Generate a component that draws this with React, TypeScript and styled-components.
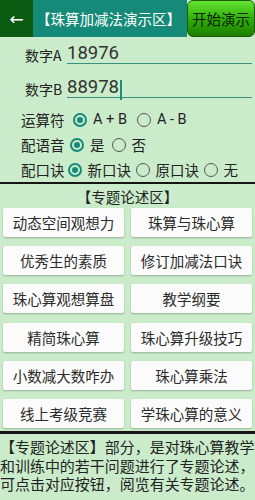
import React from 'react';
import styled, { createGlobalStyle } from 'styled-components';

const Global = createGlobalStyle`
  html, body { margin: 0; padding: 0; background: #cbeccb; }
  body {
    font-family: "Noto Sans CJK SC", "Noto Sans", sans-serif;
    color: #222;
    width: 255px;
    height: 500px;
    overflow: hidden;
  }
  * { box-sizing: border-box; }
`;

const Page = styled.div`
  width: 255px;
  height: 500px;
  display: flex;
  flex-direction: column;
  background: #cbeccb;
`;

const Header = styled.header`
  height: 37px;
  display: flex;
  align-items: stretch;
`;

const BackBtn = styled.div`
  width: 33px;
  background: #0a5a12;
  color: #fff;
  display: flex;
  align-items: center;
  justify-content: center;
  font-size: 17px;
  font-family: "DejaVu Sans", sans-serif;
`;

const Title = styled.div`
  flex: 1;
  background: #158a78;
  color: #fff;
  font-size: 14.5px;
  display: flex;
  align-items: center;
  padding-left: 3px;
  white-space: nowrap;
`;

const StartBtn = styled.button`
  width: 68px;
  margin: 0;
  padding: 0;
  border: 1px solid #1d5c05;
  border-radius: 6px;
  background: linear-gradient(#66e433, #31b00a 50%, #1c7d00);
  color: #0b2400;
  font-family: inherit;
  font-size: 14.5px;
  white-space: nowrap;
`;

const Fields = styled.div`
  display: flex;
  flex-direction: column;
  padding: 0 3px 0 25px;
`;

const FieldRow = styled.div<{ $h: number }>`
  height: ${p => p.$h}px;
  display: flex;
  align-items: flex-end;
`;

const FieldLabel = styled.span`
  width: 42px;
  font-size: 14px;
  line-height: 14px;
  padding-bottom: 2px;
  white-space: nowrap;
`;

const FieldInput = styled.div`
  flex: 1;
  height: 26px;
  border-bottom: 1px solid #3b8f80;
  display: flex;
  align-items: flex-end;
  font-family: Roboto, "Noto Sans", sans-serif;
  font-size: 18.5px;
  line-height: 20px;
  color: #333;
`;

const Caret = styled.span`
  display: inline-block;
  width: 1.5px;
  height: 20px;
  background: #1f8a78;
  margin-left: 1px;
  margin-bottom: -3px;
`;

const Radios = styled.div`
  padding: 9px 0 0 21px;
  display: flex;
  flex-direction: column;
`;

const RadioRow = styled.div<{ $gap: number }>`
  height: 25px;
  display: flex;
  align-items: center;
  gap: ${p => p.$gap}px;
`;

const RadioLabel = styled.span`
  width: 42px;
  font-size: 14.5px;
  white-space: nowrap;
`;

const Option = styled.label`
  display: flex;
  align-items: center;
  gap: 6px;
  font-family: Roboto, "Noto Sans CJK SC", sans-serif;
  font-size: 14.5px;
  white-space: nowrap;
`;

const Circle = styled.span<{ $on: boolean }>`
  width: 14px;
  height: 14px;
  border-radius: 50%;
  border: ${p => (p.$on ? '2px solid #17897a' : '1.5px solid #555')};
  display: flex;
  align-items: center;
  justify-content: center;
  &::after {
    content: '';
    width: 6px;
    height: 6px;
    border-radius: 50%;
    background: ${p => (p.$on ? '#17897a' : 'transparent')};
  }
`;

const Divider = styled.div<{ $t: number; $m?: number }>`
  height: ${p => p.$t}px;
  margin-top: ${p => p.$m ?? 0}px;
  background: #151515;
`;

const TopicTitle = styled.div`
  height: 24px;
  display: flex;
  align-items: center;
  justify-content: center;
  font-size: 14.5px;
`;

const Grid = styled.div`
  display: grid;
  grid-template-columns: 1fr 1fr;
  column-gap: 7px;
  row-gap: 9.2px;
  padding: 0 3px;
`;

const TopicBtn = styled.button`
  height: 29px;
  margin: 0;
  padding: 0;
  border: none;
  border-radius: 2px;
  background: #fbfbfb;
  box-shadow: 0 1px 2px rgba(0, 0, 0, 0.25);
  font-family: inherit;
  font-size: 14.5px;
  color: #2b2b2b;
  white-space: nowrap;
`;

const Note = styled.p`
  margin: 0;
  padding-top: 4.5px;
  font-size: 14.98px;
  line-height: 18.5px;
  color: #222;
`;

const topics = [
  '动态空间观想力', '珠算与珠心算',
  '优秀生的素质', '修订加减法口诀',
  '珠心算观想算盘', '教学纲要',
  '精简珠心算', '珠心算升级技巧',
  '小数减大数咋办', '珠心算乘法',
  '线上考级竞赛', '学珠心算的意义',
];

const radioRows: { label: string; gap: number; opts: string[] }[] = [
  { label: '运算符', gap: 10, opts: ['A + B', 'A - B'] },
  { label: '配语音', gap: 7, opts: ['是', '否'] },
  { label: '配口诀', gap: 4.5, opts: ['新口诀', '原口诀', '无'] },
];

export default function App() {
  return (
    <Page>
      <Global />
      <Header>
        <BackBtn>←</BackBtn>
        <Title>【珠算加减法演示区】</Title>
        <StartBtn>开始演示</StartBtn>
      </Header>
      <Fields>
        <FieldRow $h={27}>
          <FieldLabel>数字A</FieldLabel>
          <FieldInput>18976</FieldInput>
        </FieldRow>
        <FieldRow $h={34}>
          <FieldLabel>数字B</FieldLabel>
          <FieldInput>
            88978
            <Caret />
          </FieldInput>
        </FieldRow>
      </Fields>
      <Radios>
        {radioRows.map(r => (
          <RadioRow key={r.label} $gap={r.gap}>
            <RadioLabel>{r.label}</RadioLabel>
            {r.opts.map((o, i) => (
              <Option key={o}>
                <Circle $on={i === 0} />
                {o}
              </Option>
            ))}
          </RadioRow>
        ))}
      </Radios>
      <Divider $t={2} />
      <TopicTitle>【专题论述区】</TopicTitle>
      <Grid>
        {topics.map(t => (
          <TopicBtn key={t}>{t}</TopicBtn>
        ))}
      </Grid>
      <Divider $t={2.5} $m={3.5} />
      <Note>【专题论述区】部分，是对珠心算教学和训练中的若干问题进行了专题论述，可点击对应按钮，阅览有关专题论述。</Note>
    </Page>
  );
}
